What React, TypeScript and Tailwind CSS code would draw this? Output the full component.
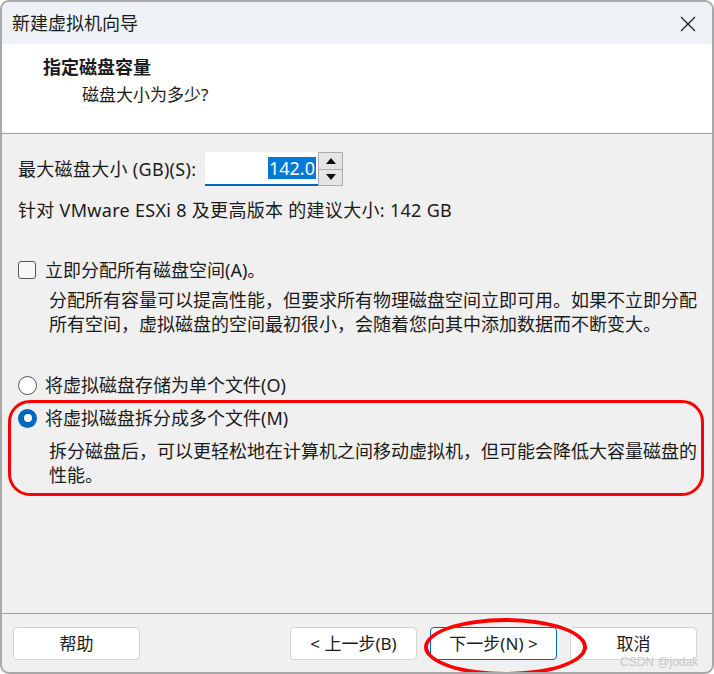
import React from 'react';

const font = { fontFamily: '"Segoe UI", "Noto Sans", "Noto Sans CJK SC", sans-serif' };

const WizardButton = ({ label, primary }: { label: string; primary?: boolean }) => (
  <button
    type="button"
    className={
      'w-[127px] h-[33px] rounded-[4px] bg-white text-[17px] text-[#1b1b1b] ' +
      (primary ? 'border border-[#0067c0]' : 'border border-[#d4d4d4]')
    }
  >
    {label}
  </button>
);

export default function App() {
  return (
    <div
      className="relative w-[714px] h-[674px] bg-[#f0f0f0] border-2 border-[#a8a8a8] rounded-[9px] overflow-hidden flex flex-col text-[#1b1b1b]"
      style={font}
    >
      {/* title bar */}
      <div className="h-[42px] shrink-0 bg-[#eef2f7] flex items-center justify-between pl-[10px] pr-[16px]">
        <span className="text-[18px]">新建虚拟机向导</span>
        <svg width="16" height="16" viewBox="0 0 16 16" className="mt-[1px]">
          <path d="M1 1 L15 15 M15 1 L1 15" stroke="#1b1b1b" strokeWidth="1.3" />
        </svg>
      </div>

      {/* header */}
      <div className="h-[90px] shrink-0 bg-white border-b border-[#a0a0a0] pl-[41px] pt-[10px]">
        <div className="text-[18px] font-bold leading-[26px]">指定磁盘容量</div>
        <div className="text-[17px] leading-[26px] pl-[39px] mt-[2px]">磁盘大小为多少?</div>
      </div>

      {/* body */}
      <div className="flex-1 pl-[16px] pr-[14px] whitespace-nowrap">
        <div className="mt-[18px] h-[34px] flex items-center">
          <span className="text-[18px] w-[187px] tracking-[0.3px]">最大磁盘大小 (GB)(S):</span>
          <div className="w-[113px] h-[34px] bg-white border-b-2 border-[#0067c0] flex items-center justify-end pr-[2px]">
            <span className="bg-[#0078d7] text-white text-[18px] leading-[22px] px-[1px]">142.0</span>
          </div>
          <div className="w-[25px] h-[34px] flex flex-col border border-[#adadad] bg-[#e5e5e5]">
            <div className="flex-1 flex items-center justify-center border-b border-[#adadad]">
              <svg width="10" height="6" viewBox="0 0 10 6"><path d="M5 0 L10 6 L0 6 Z" fill="#111" /></svg>
            </div>
            <div className="flex-1 flex items-center justify-center">
              <svg width="10" height="6" viewBox="0 0 10 6"><path d="M0 0 L10 0 L5 6 Z" fill="#111" /></svg>
            </div>
          </div>
        </div>
        <div className="mt-[12px] text-[18px] leading-[24px] tracking-[0.3px]">针对 VMware ESXi 8 及更高版本 的建议大小: 142 GB</div>

        <div className="mt-[36px] h-[24px] flex items-center">
          <div className="w-[18px] h-[18px] rounded-[3px] border border-[#555] bg-[#f7f7f7]" />
          <span className="ml-[9px] text-[18px]">立即分配所有磁盘空间(A)。</span>
        </div>
        <div className="mt-[6px] ml-[31px] text-[18px] leading-[24px]">
          <div>分配所有容量可以提高性能，但要求所有物理磁盘空间立即可用。如果不立即分配</div>
          <div>所有空间，虚拟磁盘的空间最初很小，会随着您向其中添加数据而不断变大。</div>
        </div>

        <div className="mt-[37px] h-[24px] flex items-center">
          <div className="w-[19px] h-[19px] rounded-full border border-[#555] bg-white" />
          <span className="ml-[8px] text-[18px]">将虚拟磁盘存储为单个文件(O)</span>
        </div>
        <div className="mt-[9px] h-[24px] flex items-center">
          <div className="w-[19px] h-[19px] rounded-full bg-[#0067c0] flex items-center justify-center">
            <div className="w-[8px] h-[8px] rounded-full bg-white" />
          </div>
          <span className="ml-[8px] text-[18px]">将虚拟磁盘拆分成多个文件(M)</span>
        </div>
        <div className="mt-[9px] ml-[31px] text-[18px] leading-[24px]">
          <div>拆分磁盘后，可以更轻松地在计算机之间移动虚拟机，但可能会降低大容量磁盘的</div>
          <div>性能。</div>
        </div>
      </div>

      {/* footer */}
      <div className="h-[59px] shrink-0 border-t border-[#a0a0a0] flex items-start pt-[13px] pl-[11px] pr-[15px]">
        <WizardButton label="帮助" />
        <div className="flex-1" />
        <div className="flex gap-[13px]">
          <WizardButton label="< 上一步(B)" />
          <WizardButton label="下一步(N) >" primary />
          <WizardButton label="取消" />
        </div>
      </div>

      {/* annotations */}
      <div className="absolute left-[6px] top-[398px] w-[696px] h-[96px] rounded-[22px] border-[3px] border-[#ff0000]" />
      <div className="absolute left-[422px] top-[616px] w-[163px] h-[58px] rounded-[50%] border-[4px] border-[#ff0000]" />
      <div className="absolute left-[618px] top-[651px] text-[12px] text-[#c8c8c8]" style={{ fontFamily: '"Liberation Sans", sans-serif' }}>
        CSDN @jodak
      </div>
    </div>
  );
}
